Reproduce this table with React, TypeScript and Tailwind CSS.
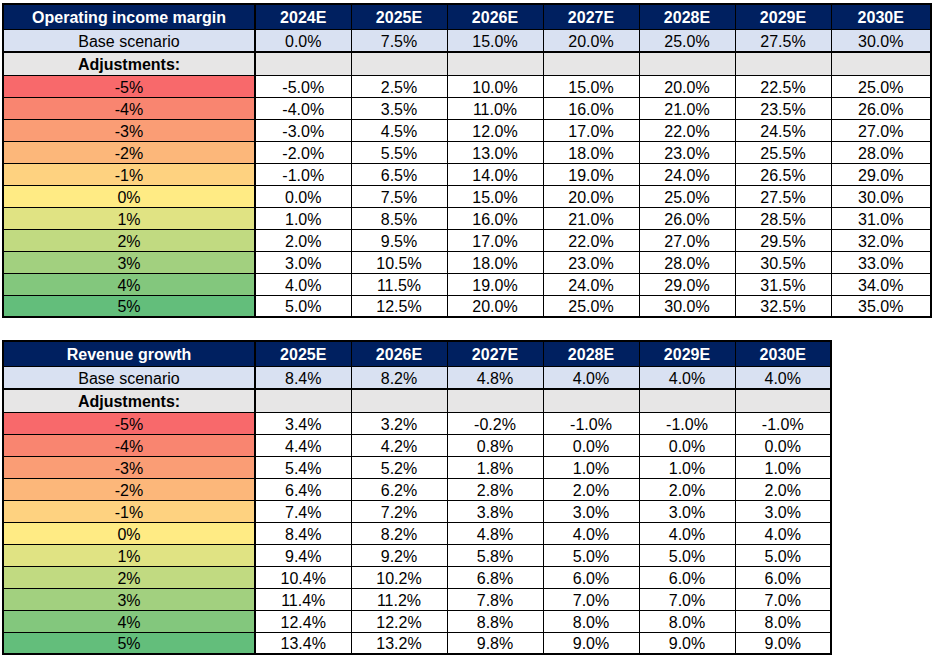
import React from 'react';

const ADJUSTMENTS = [-5, -4, -3, -2, -1, 0, 1, 2, 3, 4, 5];

// Excel red-yellow-green colour scale
const SCALE: Record<number, string> = {
  [-5]: 'bg-[#f8696b]',
  [-4]: 'bg-[#f98570]',
  [-3]: 'bg-[#fa9d75]',
  [-2]: 'bg-[#fcb77a]',
  [-1]: 'bg-[#fed280]',
  0: 'bg-[#ffeb84]',
  1: 'bg-[#e0e383]',
  2: 'bg-[#c1da81]',
  3: 'bg-[#a2d07f]',
  4: 'bg-[#83c77d]',
  5: 'bg-[#63be7b]',
};

const pct = (v: number) => `${(Math.round(v * 10) / 10).toFixed(1)}%`;

type TableProps = {
  title: string;
  years: string[];
  base: number[];
  width: string;
  lastCol?: string;
};

function SensitivityTable({ title, years, base, width, lastCol }: TableProps) {
  return (
    <table className={`${width} table-fixed border-collapse border-2 border-black text-[16px] leading-none text-black`}>
      <colgroup>
        <col className="w-[252px]" />
        {years.map((y, i) => (
          <col key={y} className={i === years.length - 1 && lastCol ? lastCol : 'w-[96px]'} />
        ))}
      </colgroup>
      <thead>
        <tr className="h-[25px] bg-[#002060] text-white">
          <th className="border-r-2 border-b border-black p-0 pt-[2px] text-center font-bold">{title}</th>
          {years.map((y) => (
            <th key={y} className="border border-black p-0 pt-[2px] text-center font-bold">
              {y}
            </th>
          ))}
        </tr>
      </thead>
      <tbody>
        <tr className="h-[23px] bg-[#d9e1f2]">
          <td className="border-r-2 border-b-2 border-black p-0 pt-[3px] text-center">Base scenario</td>
          {base.map((v, i) => (
            <td key={i} className="border border-b-2 border-black p-0 pt-[3px] text-center">
              {pct(v)}
            </td>
          ))}
        </tr>
        <tr className="h-[23px] bg-[#e7e6e6]">
          <td className="border-r-2 border-b border-black p-0 pt-[2px] text-center font-bold">Adjustments:</td>
          {base.map((_, i) => (
            <td key={i} className="border border-black p-0" />
          ))}
        </tr>
        {ADJUSTMENTS.map((a) => (
          <tr key={a} className="h-[22px]">
            <td className={`border-r-2 border-b border-black p-0 pt-[3px] text-center ${SCALE[a]}`}>{a}%</td>
            {base.map((v, i) => (
              <td key={i} className="border border-black bg-white p-0 pt-[3px] text-center">
                {pct(v + a)}
              </td>
            ))}
          </tr>
        ))}
      </tbody>
    </table>
  );
}

export default function App() {
  return (
    <div className="min-h-screen bg-white pl-[2px] pt-[3px] font-['Liberation_Sans',Arial,sans-serif]">
      <div className="flex flex-col gap-[22px]">
        <SensitivityTable
          title="Operating income margin"
          years={['2024E', '2025E', '2026E', '2027E', '2028E', '2029E', '2030E']}
          base={[0, 7.5, 15, 20, 25, 27.5, 30]}
          width="w-[929px]"
          lastCol="w-[100px]"
        />
        <SensitivityTable
          title="Revenue growth"
          years={['2025E', '2026E', '2027E', '2028E', '2029E', '2030E']}
          base={[8.4, 8.2, 4.8, 4.0, 4.0, 4.0]}
          width="w-[829px]"
        />
      </div>
    </div>
  );
}
